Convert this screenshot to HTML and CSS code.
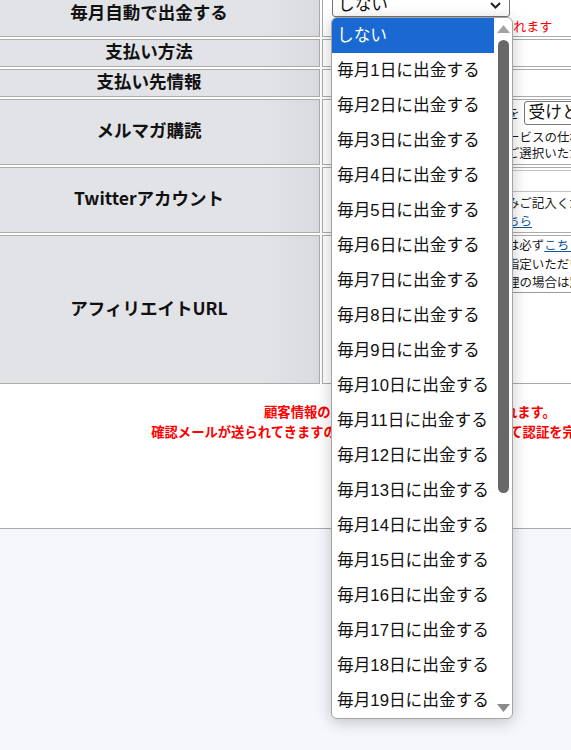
FILE: index.html
```html
<!DOCTYPE html>
<html lang="ja">
<head>
<meta charset="utf-8">
<title>顧客情報の変更</title>
<link rel="stylesheet" href="styles.css">
</head>
<body>
<div class="page">
  <div class="main">
    <table class="form">
      <tr class="r1">
        <th>毎月自動で出金する</th>
        <td>
          <div class="select select-top"><span>しない</span>
            <svg class="chev" width="11" height="7" viewBox="0 0 11 7"><path d="M1 1 L5.5 5.5 L10 1" fill="none" stroke="#222" stroke-width="2"/></svg>
          </div>
          <div class="note red">指定日に自動で出金申請が行われます</div>
        </td>
      </tr>
      <tr class="r2">
        <th>支払い方法</th>
        <td><div class="note">銀行振込</div></td>
      </tr>
      <tr class="r3">
        <th>支払い先情報</th>
        <td><div class="note">登録済み</div></td>
      </tr>
      <tr class="r4">
        <th>メルマガ購読</th>
        <td>
          <div class="line-with-select"><span class="note">当サイトからのメールマガジンを</span><div class="select select-mail"><span>受けとる</span></div></div>
          <div class="lines lines-mail">
            <div class="note">メールマガジンでは、新しいサービスの仕様変更などをお知らせします。</div>
            <div class="note">配信が不要な場合は、下記よりご選択いただけます。</div>
          </div>
        </td>
      </tr>
      <tr class="r5">
        <th>Twitterアカウント</th>
        <td>
          <div class="input"></div>
          <div class="lines lines-tw">
            <div class="note">先頭の＠を除いたユーザー名のみご記入ください。</div>
            <div class="note">※アカウント名の確認方法は<a href="#">こちら</a></div>
          </div>
        </td>
      </tr>
      <tr class="r6">
        <th>アフィリエイトURL</th>
        <td>
          <div class="lines lines-af">
            <div class="note">アフィリエイトを開始する前には必ず<a href="#">こちら</a>をご確認ください。</div>
            <div class="note">報酬のお振込先は、登録時にご指定いただいた口座となります。</div>
            <div class="note">法人アカウントでのご利用や代理の場合は別途ご連絡ください。</div>
          </div>
          <div class="urlbox"></div>
        </td>
      </tr>
    </table>
    <div class="notice">
      <p>顧客情報の変更はメール認証後に反映されます。</p>
      <p>確認メールが送られてきますので、メール内のリンクを押して認証を完了して下さい。</p>
    </div>
  </div>
</div>

<div class="popup">
  <ul class="options">
    <li class="selected">しない</li>
    <li>毎月1日に出金する</li>
    <li>毎月2日に出金する</li>
    <li>毎月3日に出金する</li>
    <li>毎月4日に出金する</li>
    <li>毎月5日に出金する</li>
    <li>毎月6日に出金する</li>
    <li>毎月7日に出金する</li>
    <li>毎月8日に出金する</li>
    <li>毎月9日に出金する</li>
    <li>毎月10日に出金する</li>
    <li>毎月11日に出金する</li>
    <li>毎月12日に出金する</li>
    <li>毎月13日に出金する</li>
    <li>毎月14日に出金する</li>
    <li>毎月15日に出金する</li>
    <li>毎月16日に出金する</li>
    <li>毎月17日に出金する</li>
    <li>毎月18日に出金する</li>
    <li>毎月19日に出金する</li>
    <li>毎月20日に出金する</li>
    <li>毎月21日に出金する</li>
  </ul>
  <div class="scrollbar">
    <svg class="arrow" width="13" height="8" viewBox="0 0 13 8"><path d="M6.5 0 L13 8 L0 8 Z" fill="#a3a3a3"/></svg>
    <div class="thumb"></div>
    <svg class="arrow arrow-down" width="13" height="8" viewBox="0 0 13 8"><path d="M0 0 L13 0 L6.5 8 Z" fill="#8a8a8a"/></svg>
  </div>
</div>
</body>
</html>
```

FILE: styles.css
```css
* { box-sizing: border-box; }
html, body { margin: 0; padding: 0; }
body {
  background: #f5f7fc;
  overflow: hidden;
  font-family: "Noto Sans CJK JP", sans-serif;
  color: #111;
}
.page {
  width: 862px;
  margin-top: -11px;
  margin-left: -21px;
}
.main {
  background: #fff;
  border-bottom: 1px solid #a9a9a9;
}
.form {
  border-collapse: separate;
  border-spacing: 2px;
  margin-left: -3px;
  width: 865px;
}
.form th, .form td {
  border: 1px solid #ababab;
  padding: 0;
}
.form th {
  width: 342px;
  background: linear-gradient(to right, #e2e3e7 84%, #d9dadf);
  font-size: 17.5px;
  font-weight: 700;
  text-align: center;
  vertical-align: middle;
  line-height: 20px;
  padding-bottom: 4px;
  color: #111;
}
.form td {
  background: #fff;
  vertical-align: top;
  padding: 1px 0 0 9px;
  font-size: 12.5px;
  line-height: 18px;
  white-space: nowrap;
}
.r1 { height: 46px; }
.r2 { height: 28px; }
.r3 { height: 28px; }
.r4 { height: 66px; }
.r5 { height: 66px; }
.r6 { height: 149px; }
.r6 td { padding-top: 0; }

.note { color: #1a1a1a; }
.red { color: #ff0000; font-size: 13px; }
.form a { color: #0d57a5; text-decoration: underline; }

.select {
  display: flex;
  align-items: center;
  height: 24px;
  border: 1px solid #767676;
  border-radius: 3px;
  background: #fff;
  font-family: "Liberation Sans", "Noto Sans CJK JP", sans-serif;
  font-size: 16.7px;
  color: #111;
  padding: 0 5px 0 5px;
}
.select-top {
  width: 178px;
  justify-content: space-between;
}
.chev { margin-right: 3px; }
.line-with-select {
  display: flex;
  align-items: center;
  gap: 4px;
}
.select-mail { width: 120px; padding-left: 4px; }
.lines-mail { margin-top: 4px; line-height: 16px; }
.input {
  margin-top: 1px;
  width: 320px;
  height: 22px;
  border: 1px solid #c4c4c4;
  background: #fff;
}
.lines-tw { margin-top: 2px; }
.lines-af { line-height: 18.5px; }
.urlbox {
  width: 420px;
  height: 88px;
  border-top: 1px solid #9a9a9a;
}

.notice {
  height: 142px;
  padding-top: 16px;
  text-align: center;
  color: #ff0000;
  font-weight: 700;
  font-size: 13.33px;
  line-height: 20px;
}
.notice p { margin: 0; }

.popup {
  position: absolute;
  left: 331px;
  top: 17px;
  width: 182px;
  height: 702px;
  display: flex;
  background: #fff;
  border: 1px solid #a4a4a4;
  border-radius: 6px;
  overflow: hidden;
  box-shadow: 0 3px 16px rgba(0, 0, 0, 0.22);
}
.options {
  list-style: none;
  margin: 0;
  padding: 0;
  width: 162px;
  flex: none;
}
.options li {
  height: 35px;
  line-height: 35px;
  padding-left: 5px;
  font-family: "Liberation Sans", "Noto Sans CJK JP", sans-serif;
  font-size: 16.7px;
  color: #111;
  white-space: nowrap;
}
.options li.selected {
  background: #1a69d2;
  color: #fff;
}
.scrollbar {
  width: 18px;
  flex: none;
  display: flex;
  flex-direction: column;
  align-items: center;
  padding-top: 7px;
  padding-bottom: 6px;
}
.arrow { display: block; flex: none; }
.thumb {
  margin-top: 7px;
  width: 11px;
  height: 453px;
  border-radius: 6px;
  background: #686868;
  flex: none;
}
.arrow-down { margin-top: auto; }
```
